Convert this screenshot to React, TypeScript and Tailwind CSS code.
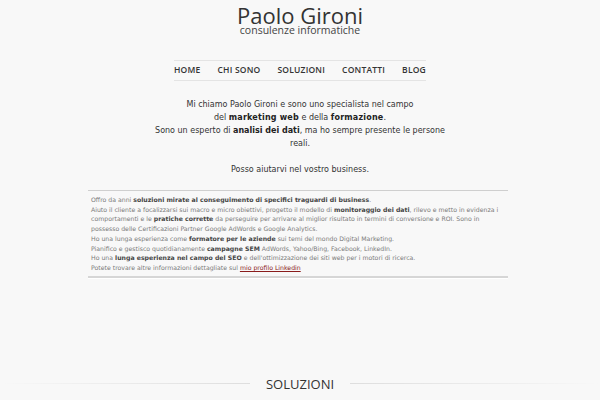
import React from 'react';

const NAV = ['Home', 'Chi sono', 'Soluzioni', 'Contatti', 'Blog'];

export default function App() {
  return (
    <div className="min-h-[400px] w-full overflow-hidden bg-[#f8f8f8] text-[#333]">
      {/* header */}
      <header className="flex flex-col items-center pt-[5px]">
        <h1 className="font-['Open_Sans',sans-serif] text-[22px] leading-[20px] text-[#333]">Paolo Gironi</h1>
        <p className="font-['Open_Sans',sans-serif] text-[10.5px] leading-[10px] text-[#444]">
          consulenze informatiche
        </p>
      </header>

      {/* nav */}
      <nav className="mx-auto mt-[25px] flex h-[21px] w-[252px] items-center justify-between border-y border-[#e4e4e4] font-['Open_Sans',sans-serif] text-[8.5px] font-semibold uppercase tracking-[0.2px] text-[#333]">
        {NAV.map((item) => (
          <a key={item} href="#" className="leading-none">
            {item}
          </a>
        ))}
      </nav>

      {/* intro */}
      <section className="mt-[17px] text-center font-['DejaVu_Sans',sans-serif] text-[8px] leading-[13px] text-[#333]">
        <p>
          Mi chiamo Paolo Gironi e sono uno specialista nel campo
          <br />
          del <b className="text-[#222] tracking-[0.2px]">marketing web</b> e della{' '}
          <b className="text-[#222] tracking-[0.2px]">formazione</b>.
          <br />
          Sono un esperto di <b className="text-[#222]">analisi dei dati</b>, ma ho sempre presente le persone
          <br />
          reali.
        </p>
        <p className="mt-[13px]">Posso aiutarvi nel vostro business.</p>
      </section>

      {/* box */}
      <section className="mx-auto mt-[14px] w-[420px] -translate-x-[2px] border-t border-[#cfcfcf] shadow-[0_1px_0_#fff]">
        <div className="whitespace-nowrap border-b-2 border-[#d6d6d6] px-[3px] pt-[4px] pb-[3px] font-['DejaVu_Sans',sans-serif] text-[6.2px] leading-[9.7px] text-[#7a7a7a]">
          Offro da anni <b className="text-[#444]">soluzioni mirate al conseguimento di specifici traguardi di business</b>.
          <br />
          Aiuto il cliente a focalizzarsi sui macro e micro obiettivi, progetto il modello di{' '}
          <b className="text-[#444]">monitoraggio dei dati</b>, rilevo e metto in evidenza i
          <br />
          comportamenti e le <b className="text-[#444]">pratiche corrette</b> da perseguire per arrivare al miglior risultato in termini di conversione e ROI. Sono in
          <br />
          possesso delle Certificazioni Partner Google AdWords e Google Analytics.
          <br />
          Ho una lunga esperienza come <b className="text-[#444]">formatore per le aziende</b> sui temi del mondo Digital Marketing.
          <br />
          Pianifico e gestisco quotidianamente <b className="text-[#444]">campagne SEM</b> AdWords, Yahoo/Bing, Facebook, LinkedIn.
          <br />
          Ho una <b className="text-[#444]">lunga esperienza nel campo del SEO</b> e dell'ottimizzazione dei siti web per i motori di ricerca.
          <br />
          Potete trovare altre informazioni dettagliate sul{' '}
          <a href="#" className="text-[#8a1c1c] underline">
            mio profilo Linkedin
          </a>
        </div>
      </section>

      {/* section heading */}
      <div className="mt-[97px] flex items-center gap-[16px]">
        <div className="h-px flex-1 bg-gradient-to-r from-transparent to-[#dedede]" />
        <h2 className="font-['Open_Sans',sans-serif] text-[13px] leading-[18px] text-[#333]">SOLUZIONI</h2>
        <div className="h-px flex-1 bg-gradient-to-l from-transparent to-[#dedede]" />
      </div>
    </div>
  );
}
